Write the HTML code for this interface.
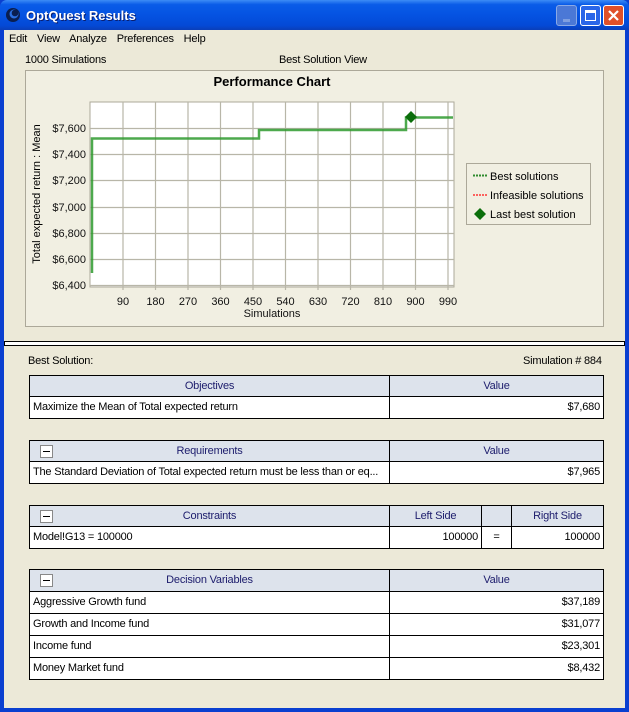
<!DOCTYPE html>
<html><head><meta charset="utf-8"><style>
*{margin:0;padding:0;box-sizing:border-box}
body{width:629px;height:712px;overflow:hidden;font-family:"Liberation Sans",Arial,sans-serif;font-size:11px;color:#000;background:#0a3fd0;position:relative}
.abs{position:absolute}
#title{left:0;top:0;width:629px;height:30px;background:linear-gradient(#3d8cf5 0%,#0a5ce8 15%,#0553e2 50%,#0449d6 85%,#0a3fb8 100%);border-radius:7px 7px 0 0}
#title .t{left:26px;top:8px;color:#fff;font-size:13px;font-weight:bold;text-shadow:1px 1px #0a1e6e}
.btn{top:5px;width:21px;height:21px;border:1px solid #fff;border-radius:3px}
#body{left:4px;top:30px;width:621px;height:678px;background:#ece9d8}
.cell{position:absolute;border:1px solid #000;background:#fff;height:23px;line-height:21px;padding:0 3px;white-space:nowrap;overflow:hidden;letter-spacing:-0.2px}
.hd{background:#dde3ec;color:#1c1c6c;text-align:center}
.r{text-align:right}
.mn{position:absolute;left:10px;top:4px;width:13px;height:13px;border:1px solid #888;background:#fff}
.mn:after{content:"";position:absolute;left:2px;top:5px;width:7px;height:1px;background:#000}
</style></head><body>
<div id="title" class="abs">
 <svg class="abs" style="left:5px;top:7px" width="16" height="16"><circle cx="8" cy="8" r="7" fill="#0a1e50"/><circle cx="9" cy="7" r="4.5" fill="#2a6ee0"/><circle cx="10" cy="6" r="3.3" fill="#0a1e50"/></svg>
 <div class="abs t">OptQuest Results</div>
 <div class="abs btn" style="left:556px;background:#4b78d6;border-color:#8aa9e6"><div class="abs" style="left:6px;top:13px;width:7px;height:3px;background:#7f9fe0"></div></div>
 <div class="abs btn" style="left:580px;background:#2a66e8"><div class="abs" style="left:4px;top:4px;width:11px;height:11px;border:1px solid #fff;border-top-width:3px"></div></div>
 <div class="abs btn" style="left:603px;background:#e0502a"><svg class="abs" style="left:3px;top:3px" width="13" height="13"><path d="M2 2L11 11M11 2L2 11" stroke="#fff" stroke-width="2.2"/></svg></div>
</div>
<div id="body" class="abs">
 <div class="abs" style="left:5px;top:3px;font-size:11px;word-spacing:7px;letter-spacing:-0.2px">Edit View Analyze Preferences Help</div>
 <div class="abs" style="left:21px;top:24px;letter-spacing:-0.2px">1000 Simulations</div>
 <div class="abs" style="left:275px;top:24px;letter-spacing:-0.2px">Best Solution View</div>
 <div class="abs" style="left:21px;top:40px;width:579px;height:257px;border:1px solid #aca899;background:#f1efe2"></div>
</div>
<svg class="abs" style="left:0;top:0" width="629" height="350">
 <text x="272" y="86" font-family="Liberation Sans" font-size="13" font-weight="bold" text-anchor="middle">Performance Chart</text>
 <rect x="90" y="102" width="364" height="185" fill="#fff" stroke="#aca899"/>
 <g stroke="#b8b6a8" stroke-width="1.2">
  <path d="M90 128.5H454M90 154.5H454M90 180.5H454M90 207.5H454M90 233.5H454M90 259.5H454M90 285.5H454"/>
  <path d="M123 102V290M155.5 102V290M188 102V290M220.5 102V290M253 102V290M285.5 102V290M318 102V290M350.5 102V290M383 102V290M415.5 102V290M448 102V290"/>
 </g>
 <path d="M92 273V138.5H259V130H406V117.5H453" fill="none" stroke="#2e9a2e" stroke-width="2.5" opacity=".85"/>
 <path d="M411 111L417 117L411 123L405 117Z" fill="#0b6e0b"/>
 <g font-family="Liberation Sans" font-size="11" text-anchor="end" fill="#111">
  <text x="86" y="132">$7,600</text><text x="86" y="158">$7,400</text><text x="86" y="184">$7,200</text><text x="86" y="211">$7,000</text><text x="86" y="237">$6,800</text><text x="86" y="263">$6,600</text><text x="86" y="289">$6,400</text>
 </g>
 <g font-family="Liberation Sans" font-size="11" text-anchor="middle" fill="#111">
  <text x="123" y="305">90</text><text x="155.5" y="305">180</text><text x="188" y="305">270</text><text x="220.5" y="305">360</text><text x="253" y="305">450</text><text x="285.5" y="305">540</text><text x="318" y="305">630</text><text x="350.5" y="305">720</text><text x="383" y="305">810</text><text x="415.5" y="305">900</text><text x="448" y="305">990</text>
  <text x="272" y="317">Simulations</text>
 </g>
 <text transform="translate(40,194) rotate(-90)" font-family="Liberation Sans" font-size="11" text-anchor="middle">Total expected return : Mean</text>
 <rect x="466.5" y="163.5" width="124" height="61" fill="#f1efe2" stroke="#aca899"/>
 <path d="M473 175.5H487" stroke="#2e8b2e" stroke-width="2" stroke-dasharray="2 1"/>
 <path d="M473 195H487" stroke="#f33" stroke-width="1.5" stroke-dasharray="2 1"/>
 <path d="M480 208L486 214L480 220L474 214Z" fill="#0b6e0b"/>
 <g font-family="Liberation Sans" font-size="11"><text x="490" y="180">Best solutions</text><text x="490" y="199">Infeasible solutions</text><text x="490" y="218">Last best solution</text></g>
 <rect x="4.5" y="341.5" width="620" height="4" fill="#fff" stroke="#000"/>
</svg>
<div class="abs" style="left:28px;top:355px;letter-spacing:-0.2px">Best Solution:</div>
<div class="abs" style="left:523px;top:355px;letter-spacing:-0.2px">Simulation # 884</div>

<div class="cell hd" style="left:29px;top:375px;width:361px">Objectives</div>
<div class="cell hd" style="left:389px;top:375px;width:215px">Value</div>
<div class="cell" style="left:29px;top:396px;width:361px">Maximize the Mean of Total expected return</div>
<div class="cell r" style="left:389px;top:396px;width:215px">$7,680</div>

<div class="cell hd" style="left:29px;top:440px;width:361px"><span class="mn"></span>Requirements</div>
<div class="cell hd" style="left:389px;top:440px;width:215px">Value</div>
<div class="cell" style="left:29px;top:461px;width:361px">The Standard Deviation of Total expected return must be less than or eq...</div>
<div class="cell r" style="left:389px;top:461px;width:215px">$7,965</div>

<div class="cell hd" style="left:29px;top:505px;width:361px"><span class="mn"></span>Constraints</div>
<div class="cell hd" style="left:389px;top:505px;width:93px">Left Side</div>
<div class="cell hd" style="left:481px;top:505px;width:31px"></div>
<div class="cell hd" style="left:511px;top:505px;width:93px">Right Side</div>
<div class="cell" style="left:29px;top:526px;width:361px">Model!G13 = 100000</div>
<div class="cell r" style="left:389px;top:526px;width:93px">100000</div>
<div class="cell" style="left:481px;top:526px;width:31px;text-align:center">=</div>
<div class="cell r" style="left:511px;top:526px;width:93px">100000</div>

<div class="cell hd" style="left:29px;top:569px;width:361px"><span class="mn"></span>Decision Variables</div>
<div class="cell hd" style="left:389px;top:569px;width:215px">Value</div>
<div class="cell" style="left:29px;top:591px;width:361px">Aggressive Growth fund</div>
<div class="cell r" style="left:389px;top:591px;width:215px">$37,189</div>
<div class="cell" style="left:29px;top:613px;width:361px">Growth and Income fund</div>
<div class="cell r" style="left:389px;top:613px;width:215px">$31,077</div>
<div class="cell" style="left:29px;top:635px;width:361px">Income fund</div>
<div class="cell r" style="left:389px;top:635px;width:215px">$23,301</div>
<div class="cell" style="left:29px;top:657px;width:361px">Money Market fund</div>
<div class="cell r" style="left:389px;top:657px;width:215px">$8,432</div>
</body></html>
